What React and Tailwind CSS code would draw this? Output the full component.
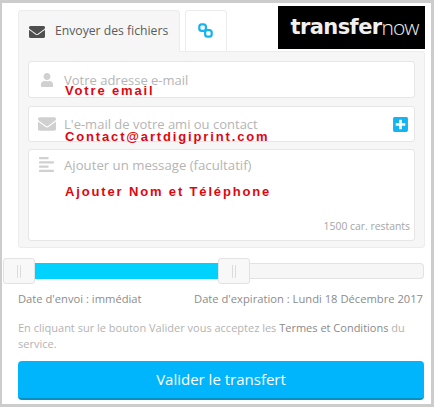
import { FaEnvelope, FaUser, FaAlignLeft, FaPlusSquare } from 'react-icons/fa'

function Handle() {
  return (
    <div className="w-[32px] h-[26px] shrink-0 bg-[#f8f8f8] border border-[#e2e2e2] rounded-[3px] flex justify-center items-center gap-[2px]">
      <div className="w-px h-[13px] bg-[#dcdcdc]" />
      <div className="w-px h-[13px] bg-[#dcdcdc]" />
    </div>
  )
}

function RedNote({ className, children }) {
  return (
    <span className={`absolute left-[46px] font-['Liberation_Sans',sans-serif] font-bold text-[13px] leading-[16px] tracking-[1.85px] text-[#e0060f] whitespace-nowrap ${className}`}>
      {children}
    </span>
  )
}

function ChainIcon() {
  return (
    <svg width="15" height="15" viewBox="0 0 16 16" fill="none" stroke="#13b4f0" strokeWidth="2.4">
      <rect x="1.4" y="1.4" width="7" height="7" rx="2.6" />
      <rect x="7.6" y="7.6" width="7" height="7" rx="2.6" />
    </svg>
  )
}

export default function App() {
  return (
    <div className="w-[434px] h-[407px] overflow-hidden bg-white border-t-[3px] border-l-[2px] border-r-[3px] border-b-[3px] border-[#cccccc] font-['Open_Sans',sans-serif] text-[#8a8a8a]">
      {/* Tabs + logo */}
      <div className="flex ml-[16px] w-[407px] h-[48px] pt-[7px] relative">
        <div className="w-[162px] h-[42px] bg-[#f6f6f6] border border-[#ececec] border-b-0 rounded-t-[4px] flex items-center pl-[10px] gap-[10px] z-10">
          <FaEnvelope className="text-[#4f4f4f] text-[16px]" />
          <span className="text-[12.2px] text-[#5b5b5b]">Envoyer des fichiers</span>
        </div>
        <div className="w-[42px] h-[41px] ml-[5px] bg-white border border-[#ececec] border-b-0 rounded-t-[4px] flex items-center justify-center pr-[1px] pb-[2px]">
          <ChainIcon />
        </div>
        <div className="ml-auto -mt-[4px] w-[147px] h-[43px] bg-black flex items-center justify-center text-[#f0f0f0] pl-[6px]">
          <span className="font-['DejaVu_Sans',sans-serif] font-bold text-[21px] tracking-[-0.6px] leading-none">transfer</span>
          <span className="font-['Open_Sans',sans-serif] font-light text-[21px] tracking-[-1px] leading-none">now</span>
        </div>
      </div>

      {/* Form panel */}
      <div className="ml-[16px] w-[407px] h-[197px] bg-[#f6f6f6] border border-[#ececec] rounded-b-[3px] rounded-tr-[3px] px-[9px] pt-[9px] flex flex-col relative">
        <div className="h-[37px] bg-white border border-[#e6e6e6] rounded-[3px] flex items-center text-[13px] text-[#b5b5b5]">
          <div className="w-[35px] flex justify-center pl-[1px]">
            <FaUser className="text-[#d0d0d0] text-[14px]" />
          </div>
          <span className="pt-[2px]">Votre adresse e-mail</span>
        </div>
        <div className="h-[36px] mt-[8px] bg-white border border-[#e6e6e6] rounded-[3px] flex items-center text-[13px] text-[#b5b5b5]">
          <div className="w-[35px] flex justify-center">
            <FaEnvelope className="text-[#d0d0d0] text-[18px]" />
          </div>
          <span className="pt-[2px]">L'e-mail de votre ami ou contact</span>
          <FaPlusSquare className="ml-auto mr-[5px] text-[#13b4f0] text-[17px]" />
        </div>
        <div className="h-[92px] mt-[7px] bg-white border border-[#e6e6e6] rounded-[3px] flex flex-col text-[13.2px] text-[#b5b5b5]">
          <div className="flex items-center h-[28px]">
            <div className="w-[35px] flex justify-center">
              <FaAlignLeft className="text-[#d0d0d0] text-[17px]" />
            </div>
            <span className="pt-[3px]">Ajouter un message (facultatif)</span>
          </div>
          <div className="mt-auto mb-[7px] mr-[4px] text-right text-[10.4px] leading-[14px] text-[#a5a5a5]">1500 car. restants</div>
        </div>
        <RedNote className="top-[31px]">Votre email</RedNote>
        <RedNote className="top-[77px]">Contact@artdigiprint.com</RedNote>
        <RedNote className="top-[132px]">Ajouter Nom et Téléphone</RedNote>
      </div>

      {/* Slider */}
      <div className="flex items-center ml-[1px] mt-[10px] w-[421px]">
        <Handle />
        <div className="w-[183px] h-[16px] bg-[#00d2ff]" />
        <Handle />
        <div className="flex-1 h-[16px] bg-[#f6f6f6] border border-[#e2e2e2] border-l-0 rounded-r-[4px]" />
      </div>

      {/* Dates */}
      <div className="flex justify-between ml-[16px] w-[405px] mt-[7px] text-[11.2px] leading-[16px] text-[#8c8c8c]">
        <span>Date d'envoi : immédiat</span>
        <span>Date d'expiration : Lundi 18 Décembre 2017</span>
      </div>

      {/* Terms */}
      <p className="ml-[16px] w-[406px] mt-[13px] text-[11px] leading-[16px] text-[#b3b3b3]">
        En cliquant sur le bouton Valider vous acceptez les <span className="text-[#8a8a8a]">Termes et Conditions</span> du<br />service.
      </p>

      {/* Submit */}
      <button className="block ml-[16px] mt-[9px] w-[406px] h-[39px] bg-[#00b5fb] border-b-[2px] border-[#0790c4] rounded-[4px] text-[15px] text-white">
        Valider le transfert
      </button>
    </div>
  )
}
